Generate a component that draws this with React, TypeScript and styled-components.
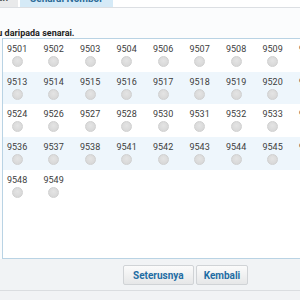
import React from 'react'
import styled, { createGlobalStyle } from 'styled-components'

const GlobalStyle = createGlobalStyle`
  html, body {
    margin: 0;
    padding: 0;
    overflow: hidden;
    background: #f1f3f5;
    font-family: Roboto, "Noto Sans", "Liberation Sans", sans-serif;
  }
`

const rows: number[][] = [
  [9501, 9502, 9503, 9504, 9506, 9507, 9508, 9509, 9510, 9511, 9512],
  [9513, 9514, 9515, 9516, 9517, 9518, 9519, 9520, 9521, 9522, 9523],
  [9524, 9526, 9527, 9528, 9530, 9531, 9532, 9533, 9534, 9535],
  [9536, 9537, 9538, 9541, 9542, 9543, 9544, 9545, 9546, 9547],
  [9548, 9549],
]

const App = () => {
  return (
    <Page>
      <GlobalStyle />
      <TabBar>
        <Tab>Peraturan</Tab>
        <Tab active>Senarai Nombor</Tab>
      </TabBar>
      <Content>
        <Instruction>Sila pilih satu daripada senarai.</Instruction>
        <ListBox>
          {rows.map((row, i) => (
            <Row key={i} striped={i % 2 === 1}>
              {row.map((n) => (
                <Cell key={n}>
                  <Num>{n}</Num>
                  <Radio />
                </Cell>
              ))}
            </Row>
          ))}
        </ListBox>
      </Content>
      <Footer>
        <Button>Seterusnya</Button>
        <Button narrow>Kembali</Button>
      </Footer>
      <Bottom />
    </Page>
  )
}

export default App

const Page = styled.div`
  width: 300px;
  height: 300px;
  display: flex;
  flex-direction: column;
  overflow: hidden;
`

const TabBar = styled.div`
  height: 7px;
  display: flex;
  align-items: flex-end;
  gap: 2px;
  margin-left: -46px;
  border-bottom: 1px solid #dcdfe3;
  background: #ffffff;
  overflow: hidden;
  flex-shrink: 0;
`

const Tab = styled.div<{ active?: boolean }>`
  flex-shrink: 0;
  padding: 6px 10px 3px;
  line-height: 12px;
  font-size: 10px;
  font-weight: 700;
  white-space: nowrap;
  background: ${(p) => (p.active ? '#d5eaf7' : '#e9eaeb')};
  color: ${(p) => (p.active ? '#2b6a98' : '#5a5a5a')};
  margin-bottom: ${(p) => (p.active ? '-1px' : '0')};
`

const Content = styled.div`
  background: #fbfcfd;
  padding-top: 20px;
  padding-left: 2px;
  flex-shrink: 0;
`

const Instruction = styled.div`
  margin-left: -54px;
  font-size: 9px;
  line-height: 10px;
  font-weight: 700;
  color: #1e1e1e;
  white-space: nowrap;
`

const ListBox = styled.div`
  box-sizing: border-box;
  width: 420px;
  height: 221px;
  border: 1px solid #b9d3e4;
  background: #ffffff;
`

const Row = styled.div<{ striped: boolean }>`
  height: 32.7px;
  display: grid;
  grid-template-columns: repeat(11, 36.5px);
  background: ${(p) => (p.striped ? '#eef6fc' : '#ffffff')};
`

const Cell = styled.div`
  justify-self: start;
  display: flex;
  flex-direction: column;
  align-items: center;
  padding-left: 4px;
  padding-top: 5px;
`

const Num = styled.span`
  font-size: 9px;
  line-height: 11px;
  color: #3d3d3d;
`

const Radio = styled.span`
  margin-top: 1px;
  width: 11px;
  height: 11px;
  box-sizing: border-box;
  border-radius: 50%;
  border: 1px solid #d0d0d0;
  background: radial-gradient(circle at 50% 40%, #e4e4e4, #d4d4d4);
`

const Footer = styled.div`
  background: #f1f3f5;
  display: flex;
  gap: 2px;
  padding: 6px 0 5px 123px;
  border-bottom: 1px solid #dadde0;
  flex-shrink: 0;
`

const Button = styled.button<{ narrow?: boolean }>`
  height: 20px;
  padding: 0 ${(p) => (p.narrow ? '7px' : '9px')};
  border: 1px solid #d0d3d6;
  border-radius: 2px;
  background: linear-gradient(#fbfbfb, #e6e7e8);
  color: #1f6da4;
  font-family: Roboto, "Noto Sans", "Liberation Sans", sans-serif;
  font-size: 10px;
  font-weight: 700;
  cursor: pointer;
`

const Bottom = styled.div`
  flex: 1;
  background: #f1f3f5;
`
